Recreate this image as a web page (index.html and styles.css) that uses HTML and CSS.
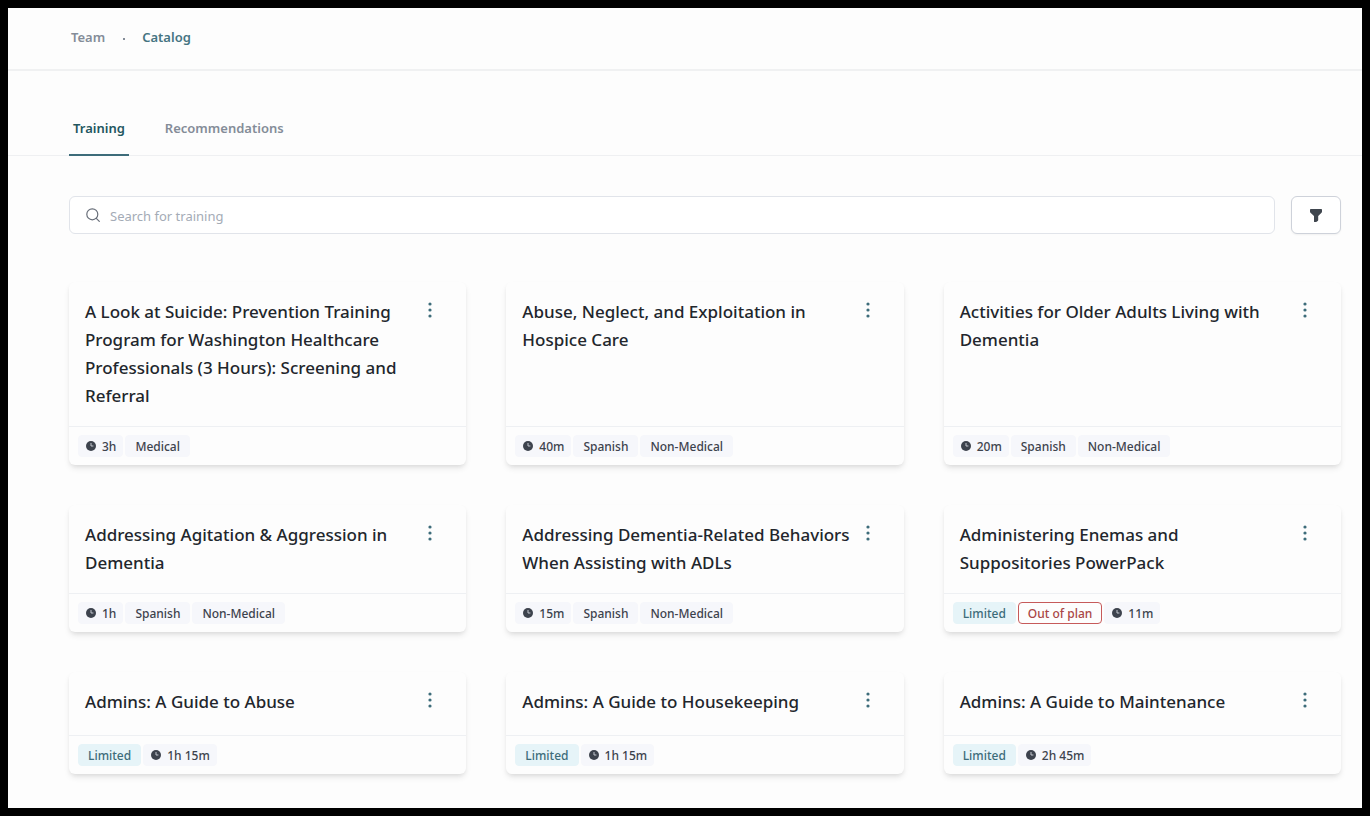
FILE: index.html
```html
<!DOCTYPE html>
<html lang="en">
<head>
    <meta charset="utf-8">
    <title>Catalog</title>
    <link rel="stylesheet" href="styles.css">
</head>

<body>
    <svg class="sprite" aria-hidden="true">
        <symbol id="clock" viewBox="0 0 10 10">
            <circle cx="5" cy="5" r="5" fill="#3d434d"/>
            <path d="M5 2v3h2.4" fill="none" stroke="#c4c8d0" stroke-width="1"/>
        </symbol>
        <symbol id="dots" viewBox="0 0 4 16">
            <circle cx="2" cy="2" r="1.6"/>
            <circle cx="2" cy="8" r="1.6"/>
            <circle cx="2" cy="14" r="1.6"/>
        </symbol>
    </svg>

    <header class="topbar">
        <nav class="breadcrumb">
            <a href="#">Team</a>
            <span class="dot"></span>
            <a href="#" class="current">Catalog</a>
        </nav>
    </header>

    <nav class="tabs">
        <a href="#" class="tab active">Training</a>
        <a href="#" class="tab">Recommendations</a>
    </nav>

    <main>
        <form class="search-row">
            <label class="search-box">
                <svg class="search-icon" viewBox="0 0 14 14" aria-hidden="true">
                    <circle cx="6.300" cy="6.300" r="5.500"/>
                    <path d="M10.300 10.300L13.300 13.300"/>
                </svg>
                <input type="text" placeholder="Search for training" aria-label="Search for training">
            </label>
            <button type="button" class="filter-btn" aria-label="Filter">
                <svg viewBox="0 0 12 13" aria-hidden="true">
                    <path d="M.8 0h10.400q.8 0 .8.8v1.700q0 .7-.5 1.200L8.200 7v4q0 .6-.5 1l-1.100.8q-.4.2-1 .2h-1q-.6 0-.6-.6V7L.5 3.700Q0 3.200 0 2.500V.8Q0 0 .8 0z"/>
                </svg>
            </button>
        </form>

        <section class="cards">
            <article class="card">
                <div class="card-body">
                    <h2>A Look at Suicide: Prevention Training Program for Washington Healthcare Professionals (3 Hours): Screening and Referral</h2>
                    <button type="button" class="menu-btn" aria-label="More"><svg><use href="#dots"/></svg></button>
                </div>
                <div class="card-footer">
                    <span class="tag time"><svg><use href="#clock"/></svg>3h</span>
                    <span class="tag">Medical</span>
                </div>
            </article>
            <article class="card">
                <div class="card-body">
                    <h2>Abuse, Neglect, and Exploitation in Hospice Care</h2>
                    <button type="button" class="menu-btn" aria-label="More"><svg><use href="#dots"/></svg></button>
                </div>
                <div class="card-footer">
                    <span class="tag time"><svg><use href="#clock"/></svg>40m</span>
                    <span class="tag">Spanish</span>
                    <span class="tag">Non-Medical</span>
                </div>
            </article>
            <article class="card">
                <div class="card-body">
                    <h2>Activities for Older Adults Living with Dementia</h2>
                    <button type="button" class="menu-btn" aria-label="More"><svg><use href="#dots"/></svg></button>
                </div>
                <div class="card-footer">
                    <span class="tag time"><svg><use href="#clock"/></svg>20m</span>
                    <span class="tag">Spanish</span>
                    <span class="tag">Non-Medical</span>
                </div>
            </article>

            <article class="card">
                <div class="card-body">
                    <h2>Addressing Agitation &amp; Aggression in Dementia</h2>
                    <button type="button" class="menu-btn" aria-label="More"><svg><use href="#dots"/></svg></button>
                </div>
                <div class="card-footer">
                    <span class="tag time"><svg><use href="#clock"/></svg>1h</span>
                    <span class="tag">Spanish</span>
                    <span class="tag">Non-Medical</span>
                </div>
            </article>
            <article class="card">
                <div class="card-body">
                    <h2>Addressing Dementia-Related Behaviors When Assisting with ADLs</h2>
                    <button type="button" class="menu-btn" aria-label="More"><svg><use href="#dots"/></svg></button>
                </div>
                <div class="card-footer">
                    <span class="tag time"><svg><use href="#clock"/></svg>15m</span>
                    <span class="tag">Spanish</span>
                    <span class="tag">Non-Medical</span>
                </div>
            </article>
            <article class="card">
                <div class="card-body">
                    <h2>Administering Enemas and Suppositories PowerPack</h2>
                    <button type="button" class="menu-btn" aria-label="More"><svg><use href="#dots"/></svg></button>
                </div>
                <div class="card-footer">
                    <span class="tag limited">Limited</span>
                    <span class="tag out">Out of plan</span>
                    <span class="tag time"><svg><use href="#clock"/></svg>11m</span>
                </div>
            </article>

            <article class="card">
                <div class="card-body">
                    <h2>Admins: A Guide to Abuse</h2>
                    <button type="button" class="menu-btn" aria-label="More"><svg><use href="#dots"/></svg></button>
                </div>
                <div class="card-footer">
                    <span class="tag limited">Limited</span>
                    <span class="tag time"><svg><use href="#clock"/></svg>1h 15m</span>
                </div>
            </article>
            <article class="card">
                <div class="card-body">
                    <h2>Admins: A Guide to Housekeeping</h2>
                    <button type="button" class="menu-btn" aria-label="More"><svg><use href="#dots"/></svg></button>
                </div>
                <div class="card-footer">
                    <span class="tag limited">Limited</span>
                    <span class="tag time"><svg><use href="#clock"/></svg>1h 15m</span>
                </div>
            </article>
            <article class="card">
                <div class="card-body">
                    <h2>Admins: A Guide to Maintenance</h2>
                    <button type="button" class="menu-btn" aria-label="More"><svg><use href="#dots"/></svg></button>
                </div>
                <div class="card-footer">
                    <span class="tag limited">Limited</span>
                    <span class="tag time"><svg><use href="#clock"/></svg>2h 45m</span>
                </div>
            </article>
        </section>
    </main>
</body>
</html>
```
FILE: styles.css
```css
* {
    box-sizing: border-box;
}
body {
    margin: 0;
    min-height: 100vh;
    border: 8px solid #000;
    background-color: #fdfdfd;
    font-family: "Noto Sans", "Segoe UI", sans-serif;
    color: #22262c;
}
a {
    text-decoration: none;
    color: #848c98;
}
button {
    font: inherit;
    padding: 0;
    cursor: pointer;
}
.sprite {
    display: none;
}
.topbar {
    padding: 19px 20px 21px 63px;
    border-bottom: 2px solid #f0f1f2;
}
.breadcrumb {
    display: flex;
    align-items: center;
    font-size: 13px;
    font-weight: 600;
    line-height: 21px;
}
.breadcrumb .dot {
    width: 2px;
    height: 2px;
    margin: 3px 17px 0 18px;
    background-color: #848c98;
}
.breadcrumb .current {
    color: #457482;
}
.tabs {
    display: flex;
    gap: 32px;
    margin-top: 31px;
    padding: 0 20px 0 61px;
    border-bottom: 1px solid #eff0f2;
}
.tab {
    padding: 16px 4px;
    margin-bottom: -1px;
    border-bottom: 2px solid transparent;
    font-size: 13px;
    font-weight: 600;
    line-height: 20px;
}
.tab.active {
    color: #23565f;
    border-bottom-color: #3d6c7a;
}
main {
    padding: 40px 21px 34px 61px;
}
.search-row {
    display: flex;
    gap: 16px;
    height: 38px;
    margin-bottom: 48px;
}
.search-box {
    flex: 1;
    display: flex;
    align-items: center;
    padding: 0 16px;
    border: 1px solid #e1e4ea;
    border-radius: 6px;
    background-color: #fff;
}
.search-box input {
    flex: 1;
    height: 36px;
    padding: 2px 0 0 10px;
    border: none;
    outline: none;
    background: none;
    font-family: inherit;
    font-size: 13px;
}
.search-box input::placeholder {
    color: #a4abb6;
}
.search-icon {
    width: 14px;
    height: 14px;
    fill: none;
    stroke: #686e79;
    stroke-width: 1.2;
    stroke-linecap: round;
}
.filter-btn {
    display: flex;
    align-items: center;
    justify-content: center;
    width: 50px;
    border: 1px solid #ced2da;
    border-radius: 6px;
    background-color: #fff;
    box-shadow: 0 1px 2px rgba(0, 0, 0, 0.05);
}
.filter-btn svg {
    width: 12px;
    height: 13px;
    fill: #3f464e;
}
.cards {
    display: grid;
    grid-template-columns: repeat(3, 1fr);
    gap: 40px;
}
.card {
    display: flex;
    flex-direction: column;
    border-radius: 6px;
    background-color: #fdfdfd;
    box-shadow: 0 4px 6px -1px rgba(0, 0, 0, 0.1), 0 2px 4px -1px rgba(0, 0, 0, 0.06);
}
.card-body {
    flex: 1;
    display: flex;
    align-items: flex-start;
    min-height: 63px;
    padding: 16px 20px 16px 16px;
}
.card-body h2 {
    flex: 1;
    margin: 0;
    font-size: 17px;
    font-weight: 500;
    line-height: 28px;
}
.menu-btn {
    display: flex;
    align-items: center;
    justify-content: center;
    width: 32px;
    height: 24px;
    border: none;
    background: none;
}
.menu-btn svg {
    width: 4px;
    height: 16px;
    fill: #3d6c7a;
}
.card-footer {
    display: flex;
    gap: 2px;
    padding: 8px 9px;
    border-top: 1px solid #eef0f3;
}
.tag {
    height: 22px;
    padding: 0 9px;
    border: 1px solid #f6f7fb;
    border-radius: 4px;
    background-color: #f6f7fb;
    color: #3d434d;
    font-size: 12px;
    font-weight: 500;
    line-height: 21px;
}
.tag.time {
    display: flex;
    align-items: center;
    gap: 6px;
    padding: 0 6px 0 7px;
}
.tag svg {
    width: 10px;
    height: 10px;
}
.tag.limited {
    border-color: #e6f4f8;
    background-color: #e6f4f8;
    color: #3d6c7a;
}
.tag.out {
    border-color: #c65a5a;
    background-color: #fdfdfd;
    color: #a94646;
}
```
